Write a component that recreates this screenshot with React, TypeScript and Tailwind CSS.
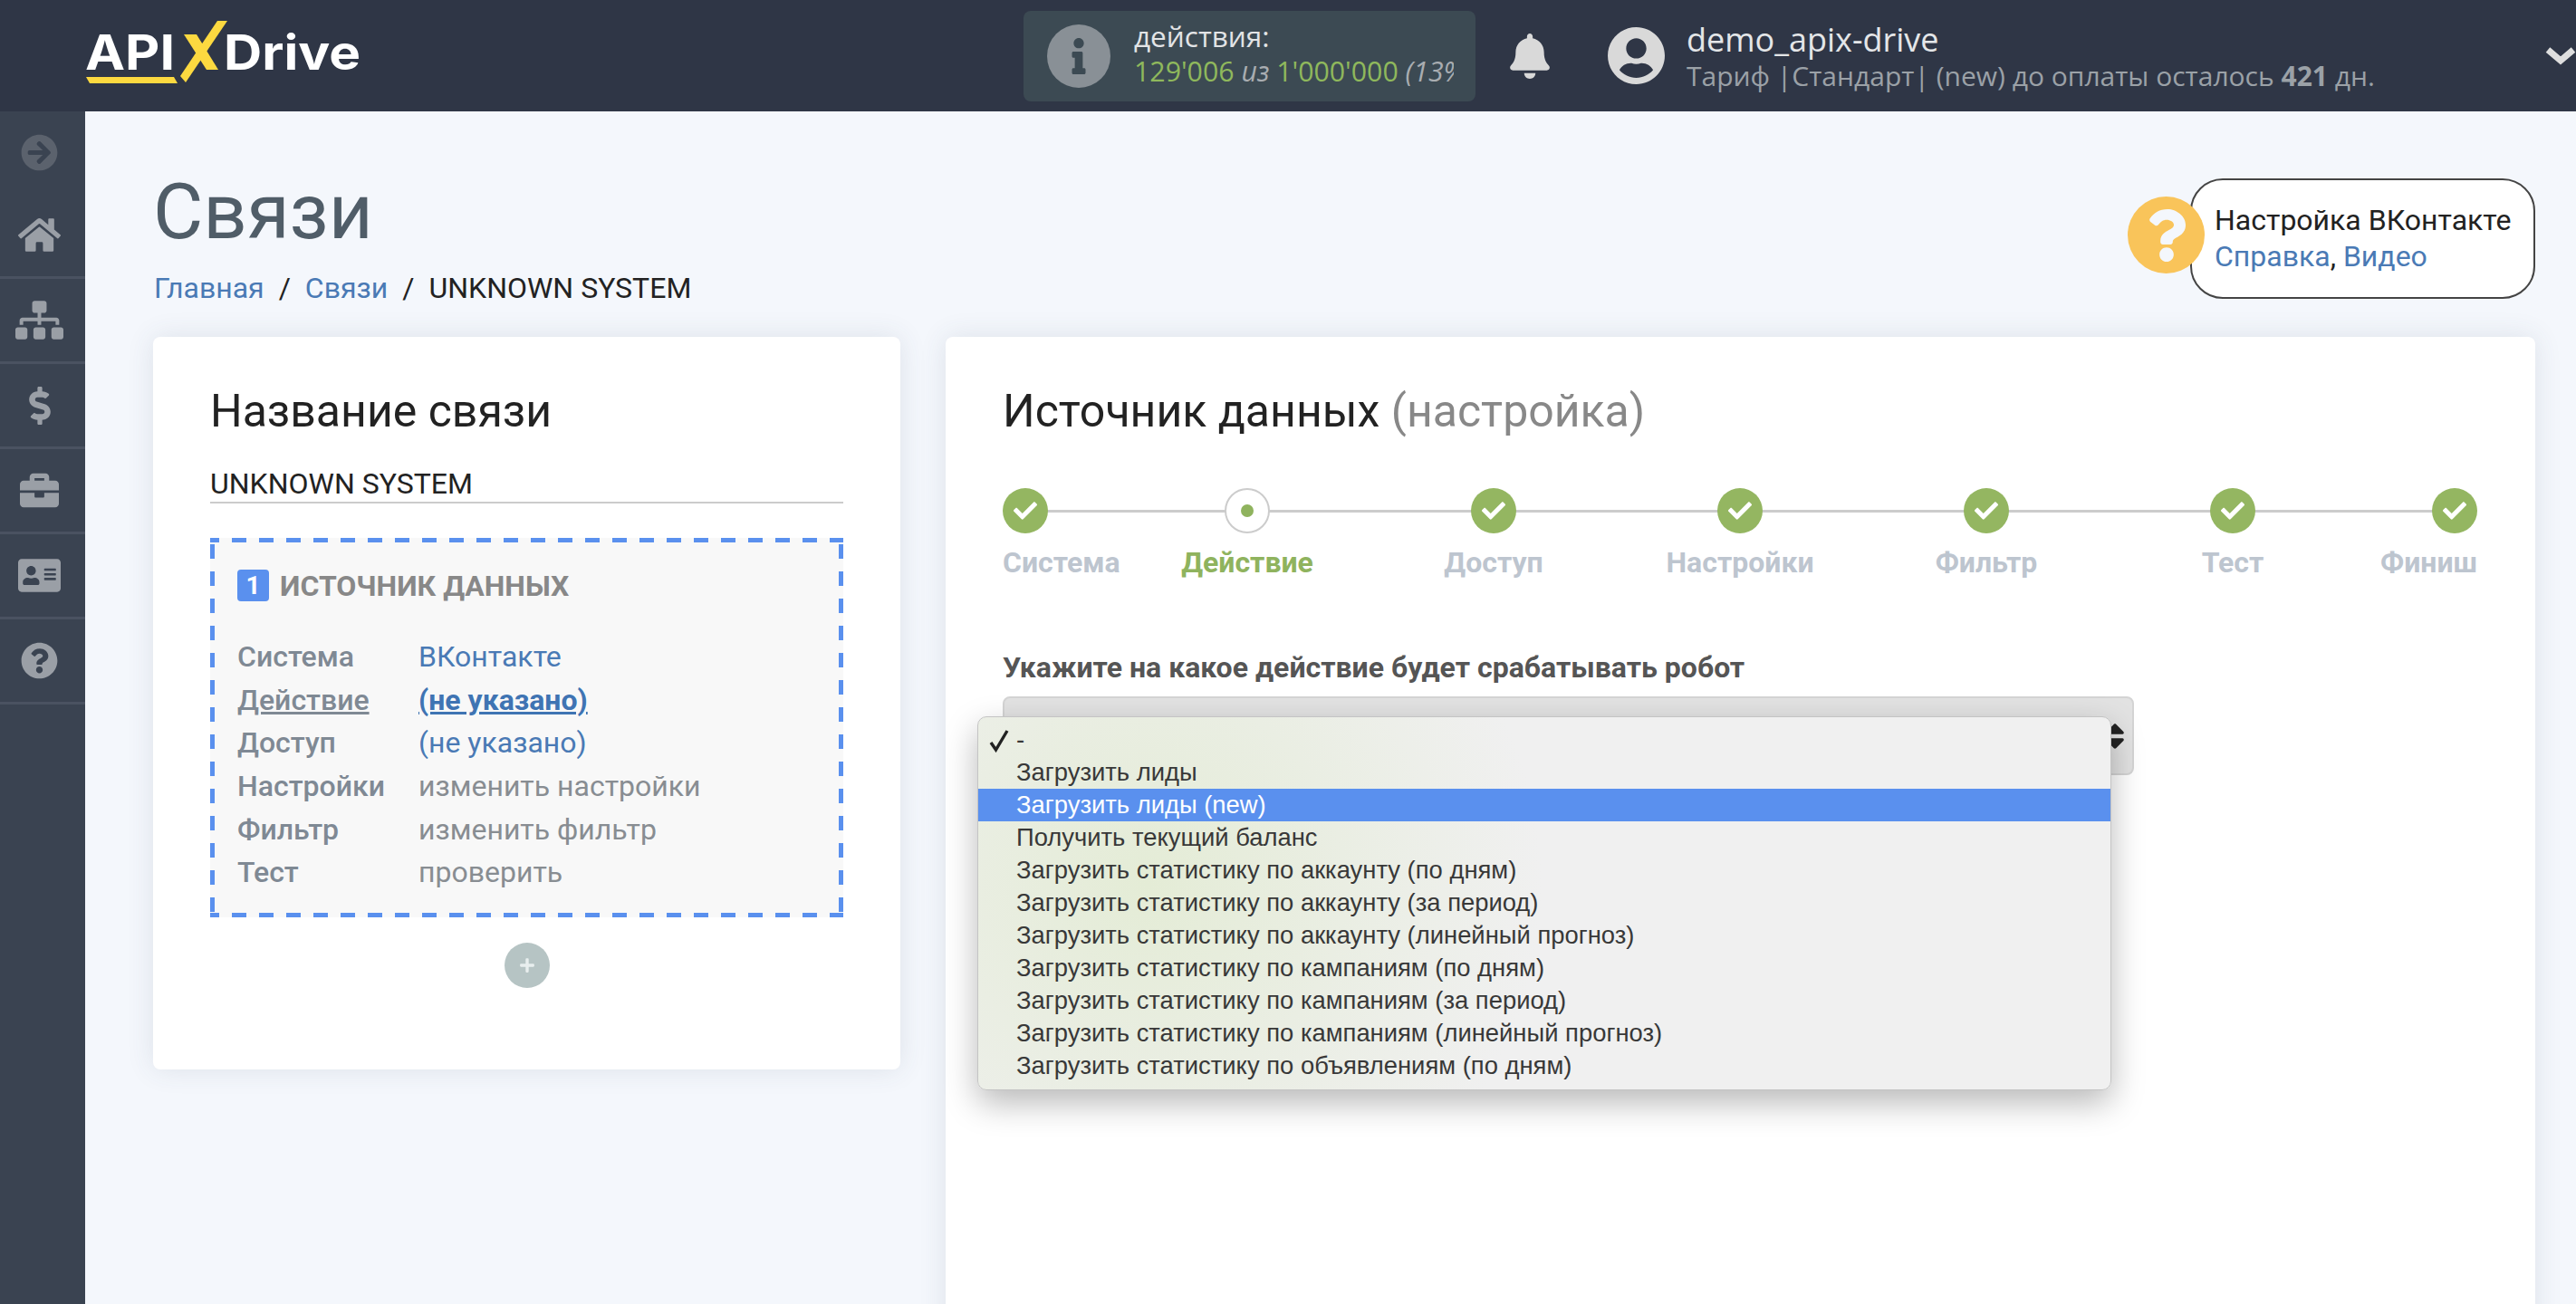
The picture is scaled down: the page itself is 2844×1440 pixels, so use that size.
import React from "react";
import {
  FaArrowCircleRight,
  FaHome,
  FaSitemap,
  FaDollarSign,
  FaBriefcase,
  FaAddressCard,
  FaQuestionCircle,
  FaBell,
  FaUserCircle,
  FaCheck,
  FaInfo,
  FaQuestion,
  FaPlus,
  FaSort,
} from "react-icons/fa";

const roboto = "font-['Roboto',sans-serif]";
const open = "font-['Open_Sans',sans-serif]";

function Logo() {
  return (
    <svg width="310" height="76" viewBox="0 0 310 76" className="block ml-[95px] -mt-[4px]">
      <text x="-1" y="55" fontFamily="Inter, sans-serif" fontWeight="700" fontSize="53" fill="#fff" textLength="99" lengthAdjust="spacingAndGlyphs">API</text>
      <polygon points="145,1 156,1 110,69 104,62" fill="#fcd940" />
      <polygon points="108,16 122,16 146,55 133,55" fill="#fcd940" />
      <polygon points="0,63 97,63 101,70 4,70" fill="#fcd940" />
      <text x="152" y="55" fontFamily="Inter, sans-serif" fontWeight="700" fontSize="53" fill="#fff" textLength="151" lengthAdjust="spacingAndGlyphs">Drive</text>
    </svg>
  );
}

const nav = [
  { I: FaHome, s: "w-[47px] h-[47px]" },
  { I: FaSitemap, s: "w-[53px] h-[53px]" },
  { I: FaDollarSign, s: "w-[24px] h-[42px]" },
  { I: FaBriefcase, s: "w-[43px] h-[43px]" },
  { I: FaAddressCard, s: "w-[47px] h-[47px]" },
  { I: FaQuestionCircle, s: "w-[41px] h-[41px]" },
];

const rows = [
  { k: "Система", v: "ВКонтакте", vc: "text-[#4a7ab5]" },
  { k: "Действие", v: "(не указано)", vc: "text-[#3f74b3] font-bold underline", kc: "underline" },
  { k: "Доступ", v: "(не указано)", vc: "text-[#4a7ab5]" },
  { k: "Настройки", v: "изменить настройки", vc: "text-[#888d92]" },
  { k: "Фильтр", v: "изменить фильтр", vc: "text-[#888d92]" },
  { k: "Тест", v: "проверить", vc: "text-[#888d92]" },
];

const steps = ["Система", "Действие", "Доступ", "Настройки", "Фильтр", "Тест", "Финиш"];

const options = [
  "-",
  "Загрузить лиды",
  "Загрузить лиды (new)",
  "Получить текущий баланс",
  "Загрузить статистику по аккаунту (по дням)",
  "Загрузить статистику по аккаунту (за период)",
  "Загрузить статистику по аккаунту (линейный прогноз)",
  "Загрузить статистику по кампаниям (по дням)",
  "Загрузить статистику по кампаниям (за период)",
  "Загрузить статистику по кампаниям (линейный прогноз)",
  "Загрузить статистику по объявлениям (по дням)",
];

export default function App() {
  return (
    <div className={`w-[2844px] h-[1440px] overflow-hidden flex flex-col bg-[#f4f7fc] ${roboto}`}>
      <header className="h-[123px] shrink-0 bg-[#2f3646] flex items-center">
        <div className="w-[1130px] shrink-0">
          <Logo />
        </div>
        <div className="w-[499px] h-[100px] shrink-0 rounded-[8px] bg-[#3c4a53] flex items-center pl-[26px] pr-[24px]">
          <div className="w-[70px] h-[70px] rounded-full bg-[#899096] flex items-center justify-center shrink-0">
            <FaInfo className="w-[30px] h-[40px] text-[#3c4a53]" />
          </div>
          <div className={`ml-[26px] min-w-0 -mt-[4px] ${open}`}>
            <div className="text-[31.5px] leading-[38px] text-[#e2e4e6]">действия:</div>
            <div className="text-[30.3px] leading-[39px] overflow-hidden whitespace-nowrap text-[#8fb85c]">
              129'006 <i className="text-[#a9adb1]">из</i> 1'000'000 <i className="text-[#a9adb1]">(13%)</i>
            </div>
          </div>
        </div>
        <FaBell className="ml-[38px] w-[44px] h-[50px] text-[#d9d9d9] shrink-0" />
        <FaUserCircle className="ml-[64px] w-[63px] h-[65px] text-[#d9d9d9] shrink-0" />
        <div className={`ml-[24px] ${open}`}>
          <div className="text-[36px] leading-[44px] text-[#e4e6e8]">demo_apix-drive</div>
          <div className="text-[30px] leading-[36px] text-[#9ba1a7] whitespace-nowrap">
            Тариф |Стандарт| (new) до оплаты осталось <b>421</b> дн.
          </div>
        </div>
        <svg width="34" height="20" viewBox="0 0 34 20" className="ml-auto shrink-0">
          <polyline points="3,3 17,15 31,3" fill="none" stroke="#dedede" strokeWidth="7" />
        </svg>
      </header>

      <div className="flex flex-1 min-h-0">
        <aside className="w-[94px] shrink-0 bg-[#3a4351]">
          <div className="h-[91px] flex items-center justify-center pr-[7px]">
            <FaArrowCircleRight className="w-[41px] h-[41px] text-[#5b626d]" />
          </div>
          {nav.map(({ I, s }, i) => (
            <div key={i} className="h-[94px] border-b-[3px] border-[#4a5261] flex items-center justify-center pr-[7px]">
              <I className={`${s} text-[#9a9fa6]`} />
            </div>
          ))}
        </aside>

        <main className="flex-1 min-w-0 pl-[75px] pr-[45px] relative">
          <div className="flex justify-between">
            <div>
              <h1 className="mt-[61px] text-[85px] leading-[100px] font-normal text-[#505d68]">Связи</h1>
              <div className="mt-[14px] ml-[1px] text-[32px] leading-[40px] whitespace-nowrap text-[#222]">
                <span className="text-[#4a7ab5]">Главная</span>
                <span className="mx-[16px]">/</span>
                <span className="text-[#4a7ab5]">Связи</span>
                <span className="mx-[16px]">/</span>
                <span>UNKNOWN SYSTEM</span>
              </div>
            </div>
            <div className="mt-[74px] flex items-center h-[133px]">
              <div className="w-[85px] h-[85px] rounded-full bg-[#f9c45a] flex items-center justify-center relative z-10 -mr-[16px] -mt-[8px]">
                <FaQuestion className="w-[44px] h-[58px] text-[#f4f7fc]" />
              </div>
              <div className="w-[381px] h-[133px] rounded-[36px] border-2 border-[#444] bg-white pl-[25px] pt-[24px] text-[32px] leading-[40px] whitespace-nowrap text-[#222]">
                <div>Настройка ВКонтакте</div>
                <div>
                  <span className="text-[#4a7ab5]">Справка</span>, <span className="text-[#4a7ab5]">Видео</span>
                </div>
              </div>
            </div>
          </div>

          <div className="mt-[34px] flex gap-[50px] items-start">
            <section className="w-[825px] h-[809px] shrink-0 bg-white rounded-[8px] shadow-[0_0_30px_rgba(60,70,100,0.12)] pt-[54px] px-[63px]">
              <h2 className="text-[50px] leading-[56px] text-[#222] whitespace-nowrap">Название связи</h2>
              <div className="mt-[26px] h-[48px] pt-[4px] border-b-2 border-[#ccc] text-[32px] leading-[44px] text-[#222]">UNKNOWN SYSTEM</div>
              <div className="mt-[38px] h-[419px] bg-[#f8f8f8] pl-[30px] pt-[35px] bg-[linear-gradient(90deg,#5a90ee_53%,transparent_53%),linear-gradient(90deg,#5a90ee_53%,transparent_53%),linear-gradient(0deg,#5a90ee_53%,transparent_53%),linear-gradient(0deg,#5a90ee_53%,transparent_53%)] bg-[length:30px_5px,30px_5px,5px_30px,5px_30px] bg-[position:-6px_0,-6px_100%,0_-7px,100%_-7px] [background-repeat:repeat-x,repeat-x,repeat-y,repeat-y]">
                <div className="flex items-center h-[35px]">
                  <span className="w-[35px] h-[35px] rounded-[4px] bg-[#5a90ee] text-white font-bold text-[28px] flex items-center justify-center">1</span>
                  <span className="ml-[12px] text-[32px] font-bold text-[#888] whitespace-nowrap">ИСТОЧНИК ДАННЫХ</span>
                </div>
                <div className="mt-[37px]">
                  {rows.map((r) => (
                    <div key={r.k} className="flex h-[47.7px] items-center text-[32px] leading-[40px] whitespace-nowrap">
                      <span className={`w-[200px] font-medium text-[#7f8994] ${r.kc ?? ""}`}>{r.k}</span>
                      <span className={r.vc}>{r.v}</span>
                    </div>
                  ))}
                </div>
              </div>
              <div className="mt-[28px] mx-auto w-[50px] h-[50px] rounded-full bg-[#b6c4c4] flex items-center justify-center">
                <FaPlus className="w-[18px] h-[18px] text-[#e8eeee]" />
              </div>
            </section>

            <section className="w-[1755px] h-[1100px] shrink-0 bg-white rounded-[8px] shadow-[0_0_30px_rgba(60,70,100,0.12)] pt-[54px] pl-[63px] relative">
              <h2 className="text-[50px] leading-[56px] text-[#222] whitespace-nowrap">
                Источник данных <span className="text-[#888]">(настройка)</span>
              </h2>
              <div className="mt-[57px] w-[1628px] relative grid grid-cols-[134px_repeat(5,272px)_134px]">
                <div className="absolute left-[25px] right-[25px] top-[24px] h-[3px] bg-[#ccc]" />
                {steps.map((s, i) => (
                  <div key={s} className={`relative flex flex-col ${i === 0 ? "items-start" : i === 6 ? "items-end" : "items-center"}`}>
                    {i === 1 ? (
                      <div className="w-[50px] h-[50px] rounded-full bg-white border-2 border-[#ccc] flex items-center justify-center">
                        <div className="w-[14px] h-[14px] rounded-full bg-[#8fb35e]" />
                      </div>
                    ) : (
                      <div className="w-[50px] h-[50px] rounded-full bg-[#94b661] flex items-center justify-center">
                        <FaCheck className="w-[28px] h-[26px] text-white" />
                      </div>
                    )}
                    <div className={`mt-[12px] text-[32px] leading-[40px] font-bold whitespace-nowrap ${i === 1 ? "text-[#8fb35e]" : "text-[#bdc5cf]"}`}>{s}</div>
                  </div>
                ))}
              </div>
              <div className="mt-[76px] text-[32px] leading-[40px] font-bold text-[#555] whitespace-nowrap">
                Укажите на какое действие будет срабатывать робот
              </div>
              <div className="mt-[12px] w-[1249px] h-[87px] rounded-[8px] bg-[#e2e2e2] border-2 border-[#d4d4d4] flex items-center justify-end pr-[8px]">
                <FaSort className="w-[22px] h-[36px] text-[#222]" />
              </div>
              <div className="absolute left-[35px] top-[419px] w-[1252px] h-[413px] rounded-[10px] border border-[#c4c4c4] pt-[7px] bg-[radial-gradient(circle_at_15%_45%,#e4ecd6_0%,#f0f0f0_40%)] shadow-[0_14px_36px_rgba(0,0,0,0.28)] font-['Liberation_Sans',sans-serif] text-[27.4px] leading-[36px] text-[#383838]">
                {options.map((o, i) => (
                  <div key={o} className={`h-[36px] pl-[42px] relative whitespace-nowrap ${i === 2 ? "bg-[#5a90ee] text-white" : ""}`}>
                    {i === 0 && (
                      <svg width="24" height="26" viewBox="0 0 24 26" className="absolute left-[11px] top-[6px]">
                        <path d="M3 15 L8.5 23 L21 2" fill="none" stroke="#222" strokeWidth="3.4" />
                      </svg>
                    )}
                    {o}
                  </div>
                ))}
              </div>
            </section>
          </div>
        </main>
      </div>
    </div>
  );
}
